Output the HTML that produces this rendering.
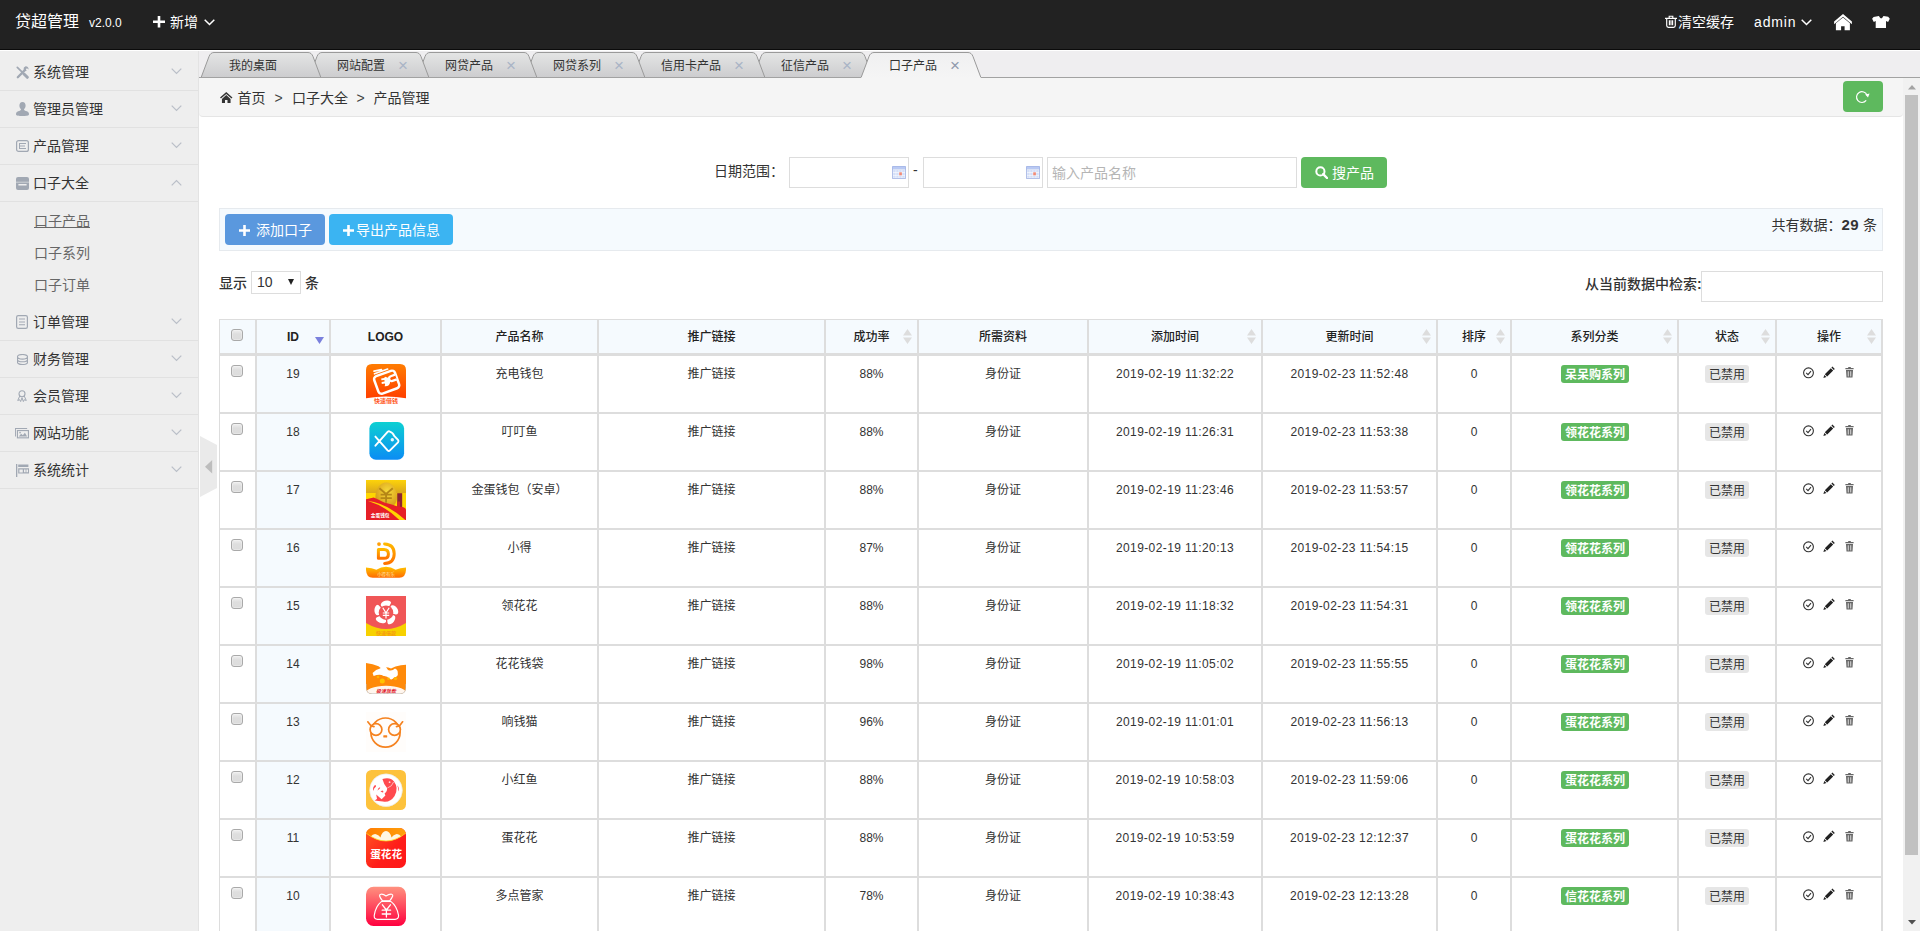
<!DOCTYPE html>
<html lang="zh-CN">
<head>
<meta charset="utf-8">
<title>贷超管理 v2.0.0</title>
<style>
*{box-sizing:border-box}
html,body{margin:0;padding:0}
body{width:1920px;height:931px;overflow:hidden;position:relative;background:#fff;color:#333;
 font-family:"Liberation Sans","Noto Sans CJK SC",sans-serif;font-size:14px;line-height:1.5}
a{color:inherit;text-decoration:none}
ul,dl,dt,dd,li{margin:0;padding:0;list-style:none}
svg{display:block}
.abs{position:absolute}
/* header */
#hd{position:absolute;left:0;top:0;width:1920px;height:50px;background:#222;border-bottom:1px solid #0b0b0b;color:#fff}
#hd .t{position:absolute;white-space:nowrap;line-height:20px}
#hd svg{position:absolute}
/* aside */
#aside{position:absolute;left:0;top:51px;width:199px;height:880px;background:#eee;border-right:1px solid #e3e3e3}
#aside dl{position:absolute;left:0;width:198px}
#aside dt{position:relative;height:37px;line-height:36px;border-bottom:1px solid #e1e1e1;padding-left:33px;font-size:14px;color:#333;white-space:nowrap}
#aside dt svg{position:absolute}
#aside dd ul{padding:3px 8px}
#aside dd li{line-height:32px;height:32px;padding-left:26px;color:#666;font-size:14px}
#aside dd li.cur a{text-decoration:underline}
/* tabs */
#tabs{position:absolute;left:199px;top:51px;width:1721px;height:27px;background:#efeef0;border-bottom:1px solid #a2a2a2}
#tabs svg{position:absolute;left:0;top:0}
#tabs .tt{position:absolute;top:6px;font-size:12px;line-height:18px;color:#333;white-space:nowrap}
#tabs .x{position:absolute;top:6px;font-size:17px;line-height:18px;color:#a9b4c6}
/* article */
#art{position:absolute;left:199px;top:78px;width:1721px;height:853px;background:#fff;overflow:hidden}
#bc{position:absolute;left:0;top:0;width:1704px;height:39px;background:#f5f5f5;border-bottom:1px solid #e5e5e5;border-radius:0 0 4px 4px}
#bc .t{position:absolute;top:10px;line-height:21px;font-size:14px;color:#333;white-space:nowrap}
#bc .gt{color:#444;font-size:14px}
#rf{position:absolute;left:1644px;top:3px;width:40px;height:31px;background:#5eb95e;border-radius:4px}
#sb{position:absolute;left:1704px;top:0;width:17px;height:853px;background:#f1f1f1}
#sb i{position:absolute;left:2px;top:17px;width:13px;height:760px;background:#c1c1c1}
.inp{position:absolute;height:31px;border:1px solid #ddd;background:#fff;font-size:14px;color:#b5b5b5;line-height:31px;padding-left:4px;white-space:nowrap}
.btn{position:absolute;height:31px;border-radius:4px;color:#fff;font-size:14px;line-height:31px;padding-top:1px;overflow:hidden;white-space:nowrap;text-align:center}
#bar{position:absolute;left:20px;top:130px;width:1664px;height:43px;background:#f5fafe;border:1px solid #e6eaee}
#tb{position:absolute;left:20px;top:241px;width:1664px;border-collapse:separate;border-spacing:0;table-layout:fixed;border-left:1px solid #ddd;border-top:1px solid #ddd;font-size:12px;color:#333}
#tb th,#tb td{border-right:2px solid #ddd;border-bottom:2px solid #ddd;text-align:center;vertical-align:top;padding:0;white-space:nowrap;overflow:hidden}
#tb th{height:36px;border-bottom-width:3px;background:#f5fafe;font-weight:500;line-height:31px;padding-top:2px;position:relative;color:#222}
#tb td{height:58px;line-height:20px;padding-top:8px;background:#fff}
#tb td.s{background:#f5fafe}
#tb td.dt{letter-spacing:.4px}
#tb .so{position:absolute;right:5px;top:9px}
.cb{display:inline-block;position:relative;left:-.5px;width:12px;height:12px;border:1px solid #a9a9a9;border-radius:3px;background:linear-gradient(#efefef,#dedede 40%,#dcdcdc);vertical-align:top;margin-top:1px;box-shadow:inset 0 0 0 1px rgba(255,255,255,.25)}
.lg{display:inline-block;width:40px;height:40px;vertical-align:top}
.lb{display:inline-block;height:18px;line-height:16px;padding:2px 4px 0;border-radius:3px;font-size:12px;vertical-align:top;margin-top:1px}
.lb.g{background:#5eb95e;color:#fff;font-weight:bold;width:68px;padding-left:0;padding-right:0;position:relative;left:.5px}
.lb.d{background:#e6e6e6;color:#333}
.lt{font-family:"Liberation Sans","Noto Sans CJK SC",sans-serif}
.ops{display:inline-block;vertical-align:top;margin-top:2px}
</style>
</head>
<body>
<div id="hd">
<span class="t" style="left:15px;top:12px;font-size:16px">贷超管理</span>
<span class="t" style="left:89px;top:13px;font-size:12px">v2.0.0</span>
<svg style="left:153px;top:16px" width="12" height="11.500" viewBox="0 0 12 12" preserveAspectRatio="none"><path d="M4.7 0h2.6v4.7H12v2.6H7.300V12H4.7V7.300H0V4.7h4.7z" fill="#fff"/></svg>
<span class="t" style="left:170px;top:12px;font-size:14px">新增</span>
<svg style="left:204px;top:19px" width="11" height="7" viewBox="0 0 11 7"><path d="M0.7 0.7 L5.5 5.5 L10.3 0.7" fill="none" stroke="#fff" stroke-width="1.5"/></svg>
<svg style="left:1665px;top:15px" width="12" height="13" viewBox="0 0 12 13"><path d="M0 3.300h12 M4.200 3V1.200h3.600V3 M1.700 3.600 V10.600 Q1.700 12.300 3.400 12.300 H8.600 Q10.300 12.300 10.300 10.600 V3.600 M4.400 5.200v5 M6 5.200v5 M7.600 5.200v5" fill="none" stroke="#fff" stroke-width="1.150"/></svg>
<span class="t" style="left:1678px;top:12px;font-size:14px">清空缓存</span>
<span class="t" style="left:1754px;top:12px;font-size:14px;letter-spacing:.85px">admin</span>
<svg style="left:1801px;top:19px" width="11" height="7" viewBox="0 0 11 7"><path d="M0.7 0.7 L5.5 5.5 L10.3 0.7" fill="none" stroke="#fff" stroke-width="1.5"/></svg>
<svg style="left:1834px;top:14px" width="18" height="17" viewBox="0 0 18 17"><path d="M9 0 L17.900 7.600 V10.200 L9 2.700 L0.100 10.200 V7.600 Z M9 3.500 L15.900 9.300 V16.300 H10.600 V12.300 H7.100 V16.300 H1.900 V9.300 Z" fill="#fff"/></svg>
<svg style="left:1872px;top:16px" width="18" height="12" viewBox="0 0 18 12"><path d="M1.600 0.900 L6.900 0.100 Q9.100 4.800 11.500 0.100 L16.200 0.800 L17.800 2.800 L16.100 5.900 L14 5 V12.100 H3.700 V5 L1.800 5.900 L0.100 2.800 Z" fill="#fff"/></svg>
</div>
<div id="aside">
<dl style="top:3px"><dt><svg style="left:16px;top:12px" width="13" height="13" viewBox="0 0 13 13"><path d="M1.300 1.300 L6.200 6.200" stroke="#a1a8b3" stroke-width="1.700" stroke-linecap="round" fill="none"/><path d="M8 8 L11.300 11.300" stroke="#a1a8b3" stroke-width="3" stroke-linecap="round" fill="none"/><path d="M1.800 11.200 L8.600 4.400" stroke="#a1a8b3" stroke-width="2.300" stroke-linecap="round" fill="none"/><path d="M9.200 0.400 Q12.200 0 12.700 3.400 L10.900 2.300 L9.900 3.300 L10.600 5 Q8 5.400 7.600 3.200 Q7.400 1.200 9.200 0.400z" fill="#a1a8b3"/></svg>系统管理<svg style="left:171px;top:14px" width="11" height="7" viewBox="0 0 11 7"><path d="M0.7 0.7 L5.5 5.5 L10.3 0.7" fill="none" stroke="#b9bec7" stroke-width="1.2"/></svg></dt></dl>
<dl style="top:40px"><dt><svg style="left:16px;top:11px" width="13" height="14" viewBox="0 0 13 14"><path d="M6.5 0 C8.6 0 9.6 1.6 9.6 3.6 C9.6 5.2 8.9 6.6 8 7.3 C8 8.2 8.6 8.6 10 9 C12.2 9.6 13 10.4 13 12.4 C13 13.4 10 14 6.5 14 C3 14 0 13.4 0 12.4 C0 10.4 0.8 9.6 3 9 C4.4 8.6 5 8.2 5 7.3 C4.1 6.6 3.4 5.2 3.4 3.6 C3.4 1.6 4.4 0 6.5 0Z" fill="#a1a8b3"/></svg>管理员管理<svg style="left:171px;top:14px" width="11" height="7" viewBox="0 0 11 7"><path d="M0.7 0.7 L5.5 5.5 L10.3 0.7" fill="none" stroke="#b9bec7" stroke-width="1.2"/></svg></dt></dl>
<dl style="top:77px"><dt><svg style="left:16px;top:12px" width="13" height="12" viewBox="0 0 13 12"><rect x=".6" y=".6" width="11.8" height="10.8" rx="2" fill="none" stroke="#a1a8b3" stroke-width="1.2"/><path d="M3 3h7v1H4v1.6h5v1H4V8h6v1H3z" fill="#a1a8b3"/></svg>产品管理<svg style="left:171px;top:14px" width="11" height="7" viewBox="0 0 11 7"><path d="M0.7 0.7 L5.5 5.5 L10.3 0.7" fill="none" stroke="#b9bec7" stroke-width="1.2"/></svg></dt></dl>
<dl style="top:114px"><dt><svg style="left:16px;top:12px" width="13" height="13" viewBox="0 0 13 13"><path d="M2 0h9q2 0 2 2v9q0 2-2 2H2q-2 0-2-2V2Q0 0 2 0z M2.4 7v1.6h8.2V7z" fill="#a1a8b3" fill-rule="evenodd"/><path d="M0 5.2h13" stroke="#eee" stroke-width=".6"/></svg>口子大全<svg style="left:171px;top:14px" width="11" height="7" viewBox="0 0 11 7"><path d="M0.7 6.3 L5.5 1.5 L10.3 6.3" fill="none" stroke="#b9bec7" stroke-width="1.2"/></svg></dt>
<dd><ul><li class="cur"><a>口子产品</a></li><li><a>口子系列</a></li><li><a>口子订单</a></li></ul></dd></dl>
<dl style="top:253px"><dt><svg style="left:16px;top:11px" width="12" height="14" viewBox="0 0 12 14"><rect x=".6" y=".6" width="10.8" height="12.8" rx="1.6" fill="none" stroke="#a1a8b3" stroke-width="1.2"/><path d="M3 3.6h6v1H3z M3 6.4h6v1H3z M3 9.2h6v1H3z" fill="#a1a8b3"/></svg>订单管理<svg style="left:171px;top:14px" width="11" height="7" viewBox="0 0 11 7"><path d="M0.7 0.7 L5.5 5.5 L10.3 0.7" fill="none" stroke="#b9bec7" stroke-width="1.2"/></svg></dt></dl>
<dl style="top:290px"><dt><svg style="left:17px;top:13px" width="11" height="11" viewBox="0 0 11 11"><path d="M5.5 0.5 C8.3 0.5 10.5 1.4 10.5 2.8 V8.2 C10.5 9.6 8.3 10.5 5.5 10.5 C2.7 10.5 0.5 9.6 0.5 8.2 V2.8 C0.5 1.4 2.7 0.5 5.5 0.5Z M0.5 2.8 C0.5 4.2 2.7 5.1 5.5 5.1 C8.3 5.1 10.5 4.2 10.5 2.8 M0.5 5.5 C0.5 6.9 2.7 7.8 5.5 7.8 C8.3 7.8 10.5 6.9 10.5 5.5" fill="none" stroke="#a1a8b3" stroke-width="1.1"/></svg>财务管理<svg style="left:171px;top:14px" width="11" height="7" viewBox="0 0 11 7"><path d="M0.7 0.7 L5.5 5.5 L10.3 0.7" fill="none" stroke="#b9bec7" stroke-width="1.2"/></svg></dt></dl>
<dl style="top:327px"><dt><svg style="left:17px;top:12px" width="10" height="12" viewBox="0 0 11 13"><circle cx="5.5" cy="4" r="3.3" fill="none" stroke="#a1a8b3" stroke-width="1.2"/><path d="M3 6.6 L0.8 11.4 L3 10.6 L4 12.6 L5.5 8.4 L7 12.6 L8 10.6 L10.2 11.4 L8 6.6" fill="none" stroke="#a1a8b3" stroke-width="1.1"/></svg>会员管理<svg style="left:171px;top:14px" width="11" height="7" viewBox="0 0 11 7"><path d="M0.7 0.7 L5.5 5.5 L10.3 0.7" fill="none" stroke="#b9bec7" stroke-width="1.2"/></svg></dt></dl>
<dl style="top:364px"><dt><svg style="left:15px;top:13px" width="14" height="10.500" viewBox="0 0 15 11"><path d="M0 0h13v1H1v8H0z" fill="#a1a8b3"/><rect x="2.6" y="2.6" width="11.8" height="7.8" fill="none" stroke="#a1a8b3" stroke-width="1.2"/><path d="M4 9 L6.6 6 L8.4 7.6 L10.6 5 L13 9z" fill="#a1a8b3"/><circle cx="5.4" cy="4.8" r=".9" fill="#a1a8b3"/></svg>网站功能<svg style="left:171px;top:14px" width="11" height="7" viewBox="0 0 11 7"><path d="M0.7 0.7 L5.5 5.5 L10.3 0.7" fill="none" stroke="#b9bec7" stroke-width="1.2"/></svg></dt></dl>
<dl style="top:401px"><dt><svg style="left:16px;top:12px" width="13" height="13" viewBox="0 0 13 13"><path d="M0 0h1.3v13H0z M2.2 0.6h10.2v2.4H2.2z M2.2 4.2h10.8v5.4H2.2z M3.4 5.4v3h3.4v-3z M8 5.6h1.6v2.6H8z M10.4 5.6H12v2.6h-1.6z" fill="#a1a8b3" fill-rule="evenodd"/></svg>系统统计<svg style="left:171px;top:14px" width="11" height="7" viewBox="0 0 11 7"><path d="M0.7 0.7 L5.5 5.5 L10.3 0.7" fill="none" stroke="#b9bec7" stroke-width="1.2"/></svg></dt></dl>
</div>
<div id="tabs"><svg width="1721" height="27" viewBox="0 0 1721 27"><defs><linearGradient id="tg" x1="0" y1="0" x2="0" y2="1"><stop offset="0" stop-color="#e4e5e5"/><stop offset="1" stop-color="#cdcdcf"/></linearGradient><linearGradient id="ta" x1="0" y1="0" x2="0" y2="1"><stop offset="0" stop-color="#f0f0f1"/><stop offset="1" stop-color="#f5f5f5"/></linearGradient></defs><path d="M554.3 26 L562 5.5 C563 3 564.5 1.5 567 1.5 H661 C663.5 1.5 665 3 666 5.5 L673.7 26 Z" fill="url(#tg)"/><path d="M554.3 26 L562 5.5 C563 3 564.5 1.5 567 1.5 H661 C663.5 1.5 665 3 666 5.5 L673.7 26" fill="none" stroke="#9a9a9a" stroke-width="1"/><path d="M434.3 26 L442 5.5 C443 3 444.5 1.5 447 1.5 H553 C555.5 1.5 557 3 558 5.5 L565.7 26 Z" fill="url(#tg)"/><path d="M434.3 26 L442 5.5 C443 3 444.5 1.5 447 1.5 H553 C555.5 1.5 557 3 558 5.5 L565.7 26" fill="none" stroke="#9a9a9a" stroke-width="1"/><path d="M326.3 26 L334 5.5 C335 3 336.5 1.5 339 1.5 H433 C435.5 1.5 437 3 438 5.5 L445.7 26 Z" fill="url(#tg)"/><path d="M326.3 26 L334 5.5 C335 3 336.5 1.5 339 1.5 H433 C435.5 1.5 437 3 438 5.5 L445.7 26" fill="none" stroke="#9a9a9a" stroke-width="1"/><path d="M218.3 26 L226 5.5 C227 3 228.5 1.5 231 1.5 H325 C327.5 1.5 329 3 330 5.5 L337.7 26 Z" fill="url(#tg)"/><path d="M218.3 26 L226 5.5 C227 3 228.5 1.5 231 1.5 H325 C327.5 1.5 329 3 330 5.5 L337.7 26" fill="none" stroke="#9a9a9a" stroke-width="1"/><path d="M110.3 26 L118 5.5 C119 3 120.5 1.5 123 1.5 H217 C219.5 1.5 221 3 222 5.5 L229.7 26 Z" fill="url(#tg)"/><path d="M110.3 26 L118 5.5 C119 3 120.5 1.5 123 1.5 H217 C219.5 1.5 221 3 222 5.5 L229.7 26" fill="none" stroke="#9a9a9a" stroke-width="1"/><path d="M2.3 26 L10 5.5 C11 3 12.5 1.5 15 1.5 H109 C111.5 1.5 113 3 114 5.5 L121.7 26 Z" fill="url(#tg)"/><path d="M2.3 26 L10 5.5 C11 3 12.5 1.5 15 1.5 H109 C111.5 1.5 113 3 114 5.5 L121.7 26" fill="none" stroke="#9a9a9a" stroke-width="1"/><path d="M662.3 26 L670 5.5 C671 3 672.5 1.5 675 1.5 H769 C771.5 1.5 773 3 774 5.5 L781.7 26 V28 H662.3 Z" fill="url(#ta)"/><path d="M662.3 26 L670 5.5 C671 3 672.5 1.5 675 1.5 H769 C771.5 1.5 773 3 774 5.5 L781.7 26" fill="none" stroke="#9a9a9a" stroke-width="1"/></svg><span class="tt" style="left:30px">我的桌面</span><span class="tt" style="left:138px">网站配置</span><span class="x" style="left:199px">×</span><span class="tt" style="left:246px">网贷产品</span><span class="x" style="left:307px">×</span><span class="tt" style="left:354px">网贷系列</span><span class="x" style="left:415px">×</span><span class="tt" style="left:462px">信用卡产品</span><span class="x" style="left:535px">×</span><span class="tt" style="left:582px">征信产品</span><span class="x" style="left:643px">×</span><span class="tt" style="left:690px">口子产品</span><span class="x" style="left:751px;color:#8f9aac">×</span></div>
<div id="art">
<div id="bc">
<svg class="abs" style="left:21px;top:13.500px" width="12.500" height="11.500" viewBox="0 0 13 12"><path d="M6.5 0 L13 5.8 L12 6.9 L6.5 2 L1 6.9 L0 5.8 Z M6.5 3.2 L11 7.2 V12 H7.8 V8.4 H5.2 V12 H2 V7.2 Z" fill="#333"/></svg>
<span class="t" style="left:38.500px">首页</span><span class="t gt" style="left:75.500px">&gt;</span>
<span class="t" style="left:93px">口子大全</span><span class="t gt" style="left:157.500px">&gt;</span>
<span class="t" style="left:174.500px">产品管理</span>
<div id="rf"><svg class="abs" style="left:12px;top:9px" width="16" height="14" viewBox="0 0 16 14"><path d="M12 5.2 A5.4 5.4 0 1 0 11.2 10.4" fill="none" stroke="#fff" stroke-width="1.2"/><path d="M10.2 4.4 L14.6 3.6 L13 7.400z" fill="#fff"/></svg></div>
</div>
<span class="abs" style="left:515px;top:83px;font-size:14px;line-height:21px;white-space:nowrap">日期范围：</span>
<div class="inp" style="left:590px;top:79px;width:120px"><svg class="abs" style="left:102px;top:8px" width="14" height="13" viewBox="0 0 14 13"><rect x="0" y="0" width="14" height="13" rx="1" fill="#9fb1e3"/><rect x=".6" y=".6" width="12.800" height="2.600" fill="#b9c9f3"/><rect x=".8" y="3.400" width="12.400" height="8.800" fill="#fff"/><g fill="#d3def8"><rect x="1.200" y="3.900" width="2.500" height="2.300"/><rect x="4.200" y="3.900" width="2.500" height="2.300"/><rect x="7.200" y="3.900" width="2.500" height="2.300"/><rect x="10.200" y="3.900" width="2.500" height="2.300"/><rect x="1.200" y="6.700" width="2.500" height="2.300"/><rect x="4.200" y="6.700" width="2.500" height="2.300"/><rect x="10.200" y="6.700" width="2.500" height="2.300"/><rect x="1.200" y="9.500" width="2.500" height="2.300"/><rect x="4.200" y="9.500" width="2.500" height="2.300"/><rect x="7.200" y="9.500" width="2.500" height="2.300"/><rect x="10.200" y="9.500" width="2.500" height="2.300"/></g><rect x="7.200" y="6.300" width="2.700" height="3" fill="#f08b78"/></svg></div>
<span class="abs" style="left:714px;top:82px;font-size:14px;line-height:21px">-</span>
<div class="inp" style="left:724px;top:79px;width:120px"><svg class="abs" style="left:102px;top:8px" width="14" height="13" viewBox="0 0 14 13"><rect x="0" y="0" width="14" height="13" rx="1" fill="#9fb1e3"/><rect x=".6" y=".6" width="12.800" height="2.600" fill="#b9c9f3"/><rect x=".8" y="3.400" width="12.400" height="8.800" fill="#fff"/><g fill="#d3def8"><rect x="1.200" y="3.900" width="2.500" height="2.300"/><rect x="4.200" y="3.900" width="2.500" height="2.300"/><rect x="7.200" y="3.900" width="2.500" height="2.300"/><rect x="10.200" y="3.900" width="2.500" height="2.300"/><rect x="1.200" y="6.700" width="2.500" height="2.300"/><rect x="4.200" y="6.700" width="2.500" height="2.300"/><rect x="10.200" y="6.700" width="2.500" height="2.300"/><rect x="1.200" y="9.500" width="2.500" height="2.300"/><rect x="4.200" y="9.500" width="2.500" height="2.300"/><rect x="7.200" y="9.500" width="2.500" height="2.300"/><rect x="10.200" y="9.500" width="2.500" height="2.300"/></g><rect x="7.200" y="6.300" width="2.700" height="3" fill="#f08b78"/></svg></div>
<div class="inp" style="left:848px;top:79px;width:250px">输入产品名称</div>
<div class="btn" style="left:1102px;top:79px;width:86px;background:#5eb95e;text-align:left;padding-left:31px"><svg class="abs" style="left:14px;top:9px" width="13" height="13" viewBox="0 0 13 13"><circle cx="5.4" cy="5.4" r="4.1" fill="none" stroke="#fff" stroke-width="2"/><path d="M8.2 8.2 L12 12" stroke="#fff" stroke-width="2.4" stroke-linecap="round"/></svg>搜产品</div>
<div id="bar">
<div class="btn" style="left:5px;top:5px;width:100px;background:#5a98de;text-align:left;padding-left:31px"><svg class="abs" style="left:14px;top:10.500px" width="11" height="11" viewBox="0 0 11 11"><path d="M4.200 0h2.600v4.200H11v2.600H6.800V11H4.200V6.800H0V4.200h4.200z" fill="#fff"/></svg>添加口子</div>
<div class="btn" style="left:109px;top:5px;width:124px;background:#3bb4f2;text-align:left;padding-left:27px"><svg class="abs" style="left:14px;top:10.500px" width="11" height="11" viewBox="0 0 11 11"><path d="M4.200 0h2.600v4.200H11v2.600H6.800V11H4.200V6.800H0V4.200h4.200z" fill="#fff"/></svg>导出产品信息</div>
<span class="abs" style="right:5px;top:5px;line-height:21px;font-size:14px;white-space:nowrap">共有数据：<b style="font-size:15px;letter-spacing:.4px">29</b> 条</span>
</div>
<span class="abs" style="left:20px;top:195px;font-size:14px;line-height:21px;font-weight:500">显示</span>
<div class="abs" style="left:52px;top:193px;width:50px;height:23px;border:1px solid #ddd;background:#fff;font-size:14px;line-height:21px;padding-left:5px">10<svg class="abs" style="left:36px;top:7px" width="6" height="6" viewBox="0 0 6 6"><path d="M0 0h6L3 6z" fill="#222"/></svg></div>
<span class="abs" style="left:106px;top:195px;font-size:14px;line-height:21px;font-weight:500">条</span>
<span class="abs" style="left:1386px;top:196px;font-size:14px;line-height:21px;font-weight:500;white-space:nowrap">从当前数据中检索<b>:</b></span>
<div class="inp" style="left:1502px;top:193px;width:182px"></div>
<table id="tb">
<colgroup><col style="width:37px"><col style="width:74px"><col style="width:111px"><col style="width:157px"><col style="width:227px"><col style="width:93px"><col style="width:170px"><col style="width:174px"><col style="width:175px"><col style="width:74px"><col style="width:167px"><col style="width:98px"><col style="width:106px"></colgroup>
<thead><tr>
<th><span class="cb" style="margin-top:7px"></span></th>
<th><b>ID</b><svg class="so" style="top:17px" width="9" height="7" viewBox="0 0 9 7"><path d="M0 0 H9 L4.5 7z" fill="#7a80dd"/></svg></th>
<th><b>LOGO</b></th>
<th>产品名称</th>
<th>推广链接</th>
<th>成功率<svg class="so" width="9" height="15" viewBox="0 0 9 15"><path d="M4.5 0 L9 6.5 H0z M0 8.5 H9 L4.5 15z" fill="#ddd"/></svg></th>
<th>所需资料</th>
<th>添加时间<svg class="so" width="9" height="15" viewBox="0 0 9 15"><path d="M4.5 0 L9 6.5 H0z M0 8.5 H9 L4.5 15z" fill="#ddd"/></svg></th>
<th>更新时间<svg class="so" width="9" height="15" viewBox="0 0 9 15"><path d="M4.5 0 L9 6.5 H0z M0 8.5 H9 L4.5 15z" fill="#ddd"/></svg></th>
<th>排序<svg class="so" width="9" height="15" viewBox="0 0 9 15"><path d="M4.5 0 L9 6.5 H0z M0 8.5 H9 L4.5 15z" fill="#ddd"/></svg></th>
<th>系列分类<svg class="so" width="9" height="15" viewBox="0 0 9 15"><path d="M4.5 0 L9 6.5 H0z M0 8.5 H9 L4.5 15z" fill="#ddd"/></svg></th>
<th>状态<svg class="so" width="9" height="15" viewBox="0 0 9 15"><path d="M4.5 0 L9 6.5 H0z M0 8.5 H9 L4.5 15z" fill="#ddd"/></svg></th>
<th>操作<svg class="so" width="9" height="15" viewBox="0 0 9 15"><path d="M4.5 0 L9 6.5 H0z M0 8.5 H9 L4.5 15z" fill="#ddd"/></svg></th>
</tr></thead>
<tbody>
<tr><td><span class="cb"></span></td><td class="s">19</td><td><svg class="lg" width="40" height="40" viewBox="0 0 40 40"><defs><linearGradient id="l19" x1="0" y1="0" x2="0" y2="1"><stop offset="0" stop-color="#ff7d02"/><stop offset="1" stop-color="#ff3f00"/></linearGradient></defs><path d="M6 0H34Q40 0 40 6V34.300Q20 30.600 0 34.300V6Q0 0 6 0z" fill="url(#l19)"/><g transform="rotate(-20 20.500 18)"><rect x="9.600" y="9" width="22" height="18.500" rx="3.200" fill="none" stroke="#fff" stroke-width="2.500"/><path d="M31 14 H26.500 Q24 14 24 16.500 Q24 19 26.500 19 H31" fill="#ff5a00" stroke="#fff" stroke-width="2.200"/><path d="M12 6.200 L26 6.200 M12.500 3.600 L20 4.600" stroke="#fff" stroke-width="1.700" stroke-linecap="round"/></g><path d="M19 12.800 Q24.600 13.600 24.200 18 Q23.600 22.600 18.600 22.200 Q19.600 20.400 18.800 19.600 L15.800 20 L15.600 18 L18.600 17.500 L18.400 16 L15.400 16.300 L15.200 14.400 L18.200 14 Q18.800 13.400 19 12.800z" fill="#fff"/><text x="20" y="39.400" font-size="6" font-weight="bold" fill="#ff5a1f" text-anchor="middle" class="lt">快速借钱</text></svg></td><td>充电钱包</td><td>推广链接</td><td>88%</td><td>身份证</td><td class="dt">2019-02-19 11:32:22</td><td class="dt">2019-02-23 11:52:48</td><td>0</td><td><span class="lb g">呆呆购系列</span></td><td><span class="lb d">已禁用</span></td><td><svg class="ops" width="52" height="13" viewBox="0 0 52 13"><circle cx="5.500" cy="6.800" r="4.900" fill="none" stroke="#333" stroke-width="1.100"/><path d="M3.200 6.900 L5 8.600 L8 5.100" fill="none" stroke="#333" stroke-width="1.100"/><path d="M29.400 0.600 L31.800 3 L30.800 4 L28.400 1.600z M27.800 2.200 L30.200 4.600 L24.200 10.600 L21.800 8.200z M21.300 8.900 L23.500 11.100 L20.400 12z" fill="#222"/><path d="M45.200 1h2.600v1H50.600v1.200h-8.200V2h2.800z M43 4h7l-.5 7.600h-6z M44.800 5.200v5.200h.8V5.200z M47.400 5.200v5.200h.8V5.200z" fill="#666" fill-rule="evenodd"/></svg></td></tr>
<tr><td><span class="cb"></span></td><td class="s">18</td><td><svg class="lg" width="40" height="40" viewBox="0 0 40 40"><defs><linearGradient id="l18" x1="0" y1="0" x2="0" y2="1"><stop offset="0" stop-color="#0dd0d2"/><stop offset="1" stop-color="#0b8cf4"/></linearGradient></defs><rect x="3.400" y="0" width="34.700" height="37.700" rx="6.500" fill="url(#l18)"/><path d="M9.400 14.600 L21.600 28.400 Q22.800 29.600 24 28.400 L32 20.300 Q33 19.100 32 17.900 L28.200 13.800 Q26.800 10.400 23.800 9.600 Q22.800 8.800 21.600 9.900 L9.400 23.700" fill="none" stroke="#fff" stroke-width="1.900" stroke-linejoin="round" stroke-linecap="round"/><circle cx="26.300" cy="17.800" r="1.700" fill="#e4f7ff"/></svg></td><td>叮叮鱼</td><td>推广链接</td><td>88%</td><td>身份证</td><td class="dt">2019-02-19 11:26:31</td><td class="dt">2019-02-23 11:53:38</td><td>0</td><td><span class="lb g">领花花系列</span></td><td><span class="lb d">已禁用</span></td><td><svg class="ops" width="52" height="13" viewBox="0 0 52 13"><circle cx="5.500" cy="6.800" r="4.900" fill="none" stroke="#333" stroke-width="1.100"/><path d="M3.200 6.900 L5 8.600 L8 5.100" fill="none" stroke="#333" stroke-width="1.100"/><path d="M29.400 0.600 L31.800 3 L30.800 4 L28.400 1.600z M27.800 2.200 L30.200 4.600 L24.200 10.600 L21.800 8.200z M21.300 8.900 L23.500 11.100 L20.400 12z" fill="#222"/><path d="M45.200 1h2.600v1H50.600v1.200h-8.200V2h2.800z M43 4h7l-.5 7.600h-6z M44.800 5.200v5.200h.8V5.200z M47.400 5.200v5.200h.8V5.200z" fill="#666" fill-rule="evenodd"/></svg></td></tr>
<tr><td><span class="cb"></span></td><td class="s">17</td><td><svg class="lg" width="40" height="40" viewBox="0 0 40 40"><defs><linearGradient id="l17" x1="0" y1="0" x2="0" y2="1"><stop offset="0" stop-color="#fdd30a"/><stop offset=".315" stop-color="#dba91b"/><stop offset=".325" stop-color="#ffd600"/><stop offset="1" stop-color="#ffd600"/></linearGradient><radialGradient id="l17e" cx=".56" cy=".36" r=".62"><stop offset="0" stop-color="#f7dc3c"/><stop offset=".55" stop-color="#e6b828"/><stop offset="1" stop-color="#d39a1a"/></radialGradient></defs><rect width="40" height="40" fill="url(#l17)"/><path d="M31.200 13.200h5v15h-5z" fill="#8c2431"/><path d="M31.200 21.500h2.800v7h-2.800z" fill="#d2272d"/><path d="M20.200 2.600 C26.600 2.600 31 10 31 17 C31 24 26.600 28.400 20.200 28.400 C13.800 28.400 9.400 24 9.400 17 C9.400 10 13.800 2.600 20.200 2.600z" fill="url(#l17e)"/><path d="M13.400 8.200 L20 14 L26.800 8.200 M14.600 14.600h11.200 M14.600 18.100h11.200 M20.100 13.800v9" stroke="#b58616" stroke-width="1.900" fill="none"/><path d="M0 19.200 L7.800 17.500 C12 19 17 22.500 22 23.600 C26 24.600 29 25.800 31 26.200 L36.500 27 Q40 28 40 30 V40 H0z" fill="#e61f27"/><path d="M1.600 20.800 Q22 24 39.400 40 H33.400 Q20 26.400 1.600 20.800z" fill="#ffd400"/><text x="4.800" y="36.900" font-size="4.700" font-weight="bold" fill="#fff" class="lt">金蛋钱包</text></svg></td><td>金蛋钱包（安卓）</td><td>推广链接</td><td>88%</td><td>身份证</td><td class="dt">2019-02-19 11:23:46</td><td class="dt">2019-02-23 11:53:57</td><td>0</td><td><span class="lb g">领花花系列</span></td><td><span class="lb d">已禁用</span></td><td><svg class="ops" width="52" height="13" viewBox="0 0 52 13"><circle cx="5.500" cy="6.800" r="4.900" fill="none" stroke="#333" stroke-width="1.100"/><path d="M3.200 6.900 L5 8.600 L8 5.100" fill="none" stroke="#333" stroke-width="1.100"/><path d="M29.400 0.600 L31.800 3 L30.800 4 L28.400 1.600z M27.800 2.200 L30.200 4.600 L24.200 10.600 L21.800 8.200z M21.300 8.900 L23.500 11.100 L20.400 12z" fill="#222"/><path d="M45.200 1h2.600v1H50.600v1.200h-8.200V2h2.800z M43 4h7l-.5 7.600h-6z M44.800 5.200v5.200h.8V5.200z M47.400 5.200v5.200h.8V5.200z" fill="#666" fill-rule="evenodd"/></svg></td></tr>
<tr><td><span class="cb"></span></td><td class="s">16</td><td><svg class="lg" width="40" height="40" viewBox="0 0 40 40"><defs><linearGradient id="l16" x1="0" y1="0" x2="0" y2="1"><stop offset="0" stop-color="#ffb800"/><stop offset="1" stop-color="#ff7300"/></linearGradient><linearGradient id="l16b" x1="0" y1="0" x2="0" y2="1"><stop offset="0" stop-color="#ffc400"/><stop offset="1" stop-color="#ff6a00"/></linearGradient></defs><circle cx="13" cy="6.100" r="1.900" fill="#ff9f0a"/><path d="M18.600 5.900 Q28.200 6.400 28.200 15.700 Q28.200 25 18.600 25.500" fill="none" stroke="url(#l16)" stroke-width="3" stroke-linecap="round"/><path d="M12.400 11.400 H18 Q22.400 11.400 22.400 15.900 Q22.400 20.300 18 20.300 H12.400 Z" fill="none" stroke="url(#l16)" stroke-width="3" stroke-linejoin="round"/><path d="M0 29.500 Q6 30 10.400 31.800 Q15 28.800 20 28.800 Q25 28.800 29.600 31.800 Q34 30 40 29.500 Q40.500 40 33 39.800 H7 Q-0.500 40 0 29.500z" fill="url(#l16b)"/><text x="20" y="37.600" font-size="4.400" fill="#ffe6b0" text-anchor="middle" class="lt">小得有乐</text></svg></td><td>小得</td><td>推广链接</td><td>87%</td><td>身份证</td><td class="dt">2019-02-19 11:20:13</td><td class="dt">2019-02-23 11:54:15</td><td>0</td><td><span class="lb g">领花花系列</span></td><td><span class="lb d">已禁用</span></td><td><svg class="ops" width="52" height="13" viewBox="0 0 52 13"><circle cx="5.500" cy="6.800" r="4.900" fill="none" stroke="#333" stroke-width="1.100"/><path d="M3.200 6.900 L5 8.600 L8 5.100" fill="none" stroke="#333" stroke-width="1.100"/><path d="M29.400 0.600 L31.800 3 L30.800 4 L28.400 1.600z M27.800 2.200 L30.200 4.600 L24.200 10.600 L21.800 8.200z M21.300 8.900 L23.500 11.100 L20.400 12z" fill="#222"/><path d="M45.200 1h2.600v1H50.600v1.200h-8.200V2h2.800z M43 4h7l-.5 7.600h-6z M44.800 5.200v5.200h.8V5.200z M47.400 5.200v5.200h.8V5.200z" fill="#666" fill-rule="evenodd"/></svg></td></tr>
<tr><td><span class="cb"></span></td><td class="s">15</td><td><svg class="lg" width="40" height="40" viewBox="0 0 40 40"><rect width="40" height="40" fill="#f7d100"/><path d="M0 0H40V27 Q20 39 0 27z" fill="#f05657"/><g fill="#fff"><ellipse cx="20" cy="8.200" rx="5.400" ry="3.500" transform="rotate(0 20 16.700) rotate(-16 20 8.200)"/><ellipse cx="20" cy="8.200" rx="5.400" ry="3.500" transform="rotate(72 20 16.700) rotate(-16 20 8.200)"/><ellipse cx="20" cy="8.200" rx="5.400" ry="3.500" transform="rotate(144 20 16.700) rotate(-16 20 8.200)"/><ellipse cx="20" cy="8.200" rx="5.400" ry="3.500" transform="rotate(216 20 16.700) rotate(-16 20 8.200)"/><ellipse cx="20" cy="8.200" rx="5.400" ry="3.500" transform="rotate(288 20 16.700) rotate(-16 20 8.200)"/></g><circle cx="20" cy="16.700" r="7.300" fill="#f05657"/><g stroke="#f05657" stroke-width="1.300" fill="none"><path d="M23.600 10.800 Q25.600 8 26.400 5" transform="rotate(0 20 16.700)"/><path d="M23.600 10.800 Q25.600 8 26.400 5" transform="rotate(72 20 16.700)"/><path d="M23.600 10.800 Q25.600 8 26.400 5" transform="rotate(144 20 16.700)"/><path d="M23.600 10.800 Q25.600 8 26.400 5" transform="rotate(216 20 16.700)"/><path d="M23.600 10.800 Q25.600 8 26.400 5" transform="rotate(288 20 16.700)"/></g><path d="M16.800 11.800 L20 16.800 L23.200 11.800 M16.800 17h6.400 M16.800 19.400h6.400 M20 16.600v5.800" stroke="#fff" stroke-width="1.200" fill="none"/><text x="20" y="39" font-size="5" font-weight="bold" fill="#f59a12" text-anchor="middle" class="lt">快速借款</text></svg></td><td>领花花</td><td>推广链接</td><td>88%</td><td>身份证</td><td class="dt">2019-02-19 11:18:32</td><td class="dt">2019-02-23 11:54:31</td><td>0</td><td><span class="lb g">领花花系列</span></td><td><span class="lb d">已禁用</span></td><td><svg class="ops" width="52" height="13" viewBox="0 0 52 13"><circle cx="5.500" cy="6.800" r="4.900" fill="none" stroke="#333" stroke-width="1.100"/><path d="M3.200 6.900 L5 8.600 L8 5.100" fill="none" stroke="#333" stroke-width="1.100"/><path d="M29.400 0.600 L31.800 3 L30.800 4 L28.400 1.600z M27.800 2.200 L30.200 4.600 L24.200 10.600 L21.800 8.200z M21.300 8.900 L23.500 11.100 L20.400 12z" fill="#222"/><path d="M45.200 1h2.600v1H50.600v1.200h-8.200V2h2.800z M43 4h7l-.5 7.600h-6z M44.800 5.200v5.200h.8V5.200z M47.400 5.200v5.200h.8V5.200z" fill="#666" fill-rule="evenodd"/></svg></td></tr>
<tr><td><span class="cb"></span></td><td class="s">14</td><td><svg class="lg" width="40" height="40" viewBox="0 0 40 40"><defs><clipPath id="c14"><rect width="40" height="40" rx="6"/></clipPath></defs><g clip-path="url(#c14)"><rect width="40" height="40" fill="#fff"/><path d="M0 8.900 Q7 9.600 12.500 12.200 L15 14.200 Q20 12 25 14.600 L29.500 12.400 Q35 11 40 10.700 V40 H0z" fill="#ff8a0a"/><path d="M6.600 19 Q10 15.600 14 14.600 Q17 11.600 20 13 L22 16 Q26 17.600 29 14.600 Q32 15.500 31.800 19.400 Q32.400 22.400 28 23.600 Q26.600 26.200 23.600 25 Q21 21.600 17.600 22 Q14 19.600 7.600 22z" fill="#fff"/><circle cx="16.300" cy="27" r="2.500" fill="#ffc400"/><circle cx="29.500" cy="24.600" r="1.700" fill="#ffb400"/><circle cx="12" cy="23" r="1.300" fill="#ffb400"/><circle cx="22.500" cy="24.800" r="1.300" fill="#ffb400"/><ellipse cx="20" cy="40.500" rx="21.500" ry="8.800" fill="#fff6ee"/><text x="20" y="38.600" font-size="5" font-weight="bold" font-style="italic" fill="#e0222e" text-anchor="middle" class="lt">极速放款</text></g><path d="M.3 30 V34 Q.3 39.700 6 39.700 H34 Q39.700 39.700 39.700 34 V30" fill="none" stroke="#b9b9b9" stroke-width=".6"/></svg></td><td>花花钱袋</td><td>推广链接</td><td>98%</td><td>身份证</td><td class="dt">2019-02-19 11:05:02</td><td class="dt">2019-02-23 11:55:55</td><td>0</td><td><span class="lb g">蛋花花系列</span></td><td><span class="lb d">已禁用</span></td><td><svg class="ops" width="52" height="13" viewBox="0 0 52 13"><circle cx="5.500" cy="6.800" r="4.900" fill="none" stroke="#333" stroke-width="1.100"/><path d="M3.200 6.900 L5 8.600 L8 5.100" fill="none" stroke="#333" stroke-width="1.100"/><path d="M29.400 0.600 L31.800 3 L30.800 4 L28.400 1.600z M27.800 2.200 L30.200 4.600 L24.200 10.600 L21.800 8.200z M21.300 8.900 L23.500 11.100 L20.400 12z" fill="#222"/><path d="M45.200 1h2.600v1H50.600v1.200h-8.200V2h2.800z M43 4h7l-.5 7.600h-6z M44.800 5.200v5.200h.8V5.200z M47.400 5.200v5.200h.8V5.200z" fill="#666" fill-rule="evenodd"/></svg></td></tr>
<tr><td><span class="cb"></span></td><td class="s">13</td><td><svg class="lg" width="40" height="40" viewBox="0 0 40 40"><rect width="40" height="40" fill="#fffdfb"/><g fill="none" stroke="#f5821f" stroke-width="1.700"><circle cx="19.500" cy="20.600" r="14.600"/><circle cx="10" cy="17.500" r="5.900" fill="#fffdfb"/><circle cx="28.500" cy="17.500" r="5.900" fill="#fffdfb"/><path d="M1.800 9.800 L5 13.800 L8 14.600 M36.600 9.800 L33.600 13.800 L30.500 14.600" stroke-linecap="round"/></g><rect x="17.300" y="23.200" width="3.900" height="2.300" rx=".6" fill="#f5821f"/></svg></td><td>响钱猫</td><td>推广链接</td><td>96%</td><td>身份证</td><td class="dt">2019-02-19 11:01:01</td><td class="dt">2019-02-23 11:56:13</td><td>0</td><td><span class="lb g">蛋花花系列</span></td><td><span class="lb d">已禁用</span></td><td><svg class="ops" width="52" height="13" viewBox="0 0 52 13"><circle cx="5.500" cy="6.800" r="4.900" fill="none" stroke="#333" stroke-width="1.100"/><path d="M3.200 6.900 L5 8.600 L8 5.100" fill="none" stroke="#333" stroke-width="1.100"/><path d="M29.400 0.600 L31.800 3 L30.800 4 L28.400 1.600z M27.800 2.200 L30.200 4.600 L24.200 10.600 L21.800 8.200z M21.300 8.900 L23.500 11.100 L20.400 12z" fill="#222"/><path d="M45.200 1h2.600v1H50.600v1.200h-8.200V2h2.800z M43 4h7l-.5 7.600h-6z M44.800 5.200v5.200h.8V5.200z M47.400 5.200v5.200h.8V5.200z" fill="#666" fill-rule="evenodd"/></svg></td></tr>
<tr><td><span class="cb"></span></td><td class="s">12</td><td><svg class="lg" width="40" height="40" viewBox="0 0 40 40"><rect width="40" height="40" rx="5.500" fill="#fdc23c"/><circle cx="20" cy="20.200" r="16.500" fill="#fff"/><circle cx="20" cy="20.200" r="16.300" fill="none" stroke="#e3e0d8" stroke-width=".5"/><path d="M16.400 9 Q24 6.600 28 11.500 Q33 18 28.600 26 Q24 33 17 31.600 Q12 30.600 8.600 30.400 Q10.600 29.600 11 28.800 L10.200 24.600 L15.600 29.200 L19.400 25.400 L18.600 23.600 Q21.600 21 21 18 Q18 15 16.400 9z" fill="#ff4a4f"/><path d="M31.200 15.200 Q34 18 32.400 21.600 Q32.600 18 31.200 15.200z M7.200 21 Q6.400 17 9 15 Q10.400 15.400 10 16.400 Q7.800 18 7.200 21z M11.500 20.600 Q12 17.600 14 17.200 Q14.600 18 13.600 18.800z M14.400 21.200 l2.200 -.6 1 1.400 -1.200 .4z" fill="#ff4a4f"/><circle cx="23.600" cy="12.200" r=".9" fill="#ffd9da"/><path d="M21.400 18 Q26 16.600 27.600 12" fill="none" stroke="#fff" stroke-width=".6"/></svg></td><td>小红鱼</td><td>推广链接</td><td>88%</td><td>身份证</td><td class="dt">2019-02-19 10:58:03</td><td class="dt">2019-02-23 11:59:06</td><td>0</td><td><span class="lb g">蛋花花系列</span></td><td><span class="lb d">已禁用</span></td><td><svg class="ops" width="52" height="13" viewBox="0 0 52 13"><circle cx="5.500" cy="6.800" r="4.900" fill="none" stroke="#333" stroke-width="1.100"/><path d="M3.200 6.900 L5 8.600 L8 5.100" fill="none" stroke="#333" stroke-width="1.100"/><path d="M29.400 0.600 L31.800 3 L30.800 4 L28.400 1.600z M27.800 2.200 L30.200 4.600 L24.200 10.600 L21.800 8.200z M21.300 8.900 L23.500 11.100 L20.400 12z" fill="#222"/><path d="M45.200 1h2.600v1H50.600v1.200h-8.200V2h2.800z M43 4h7l-.5 7.600h-6z M44.800 5.200v5.200h.8V5.200z M47.400 5.200v5.200h.8V5.200z" fill="#666" fill-rule="evenodd"/></svg></td></tr>
<tr><td><span class="cb"></span></td><td class="s">11</td><td><svg class="lg" width="40" height="40" viewBox="0 0 40 40"><defs><linearGradient id="l11" x1="0" y1="0" x2="1" y2="1"><stop offset="0" stop-color="#ff5722"/><stop offset=".6" stop-color="#ff1d1a"/><stop offset="1" stop-color="#ff1718"/></linearGradient><linearGradient id="l11b" x1="0" y1="0" x2="1" y2="0"><stop offset="0" stop-color="#ff7e00"/><stop offset="1" stop-color="#ffa00c"/></linearGradient><clipPath id="c11"><rect width="40" height="40" rx="6.500"/></clipPath></defs><g clip-path="url(#c11)"><rect width="40" height="40" fill="url(#l11)"/><path d="M0 0H40V5 Q20 21 0 5z" fill="url(#l11b)"/><path d="M4.800 8.600 Q7 5.600 10 6.200 Q13 7 14.500 9.600 Q16 3 20 3 Q24 3 25.500 9.600 Q27 7 30 6.200 Q33 5.600 35.200 8.600 Q20 17.600 4.800 8.600z" fill="#fff7e2"/><path d="M0 5 Q20 21 40 5" fill="none" stroke="#ffd21a" stroke-width=".8"/></g><text x="20.200" y="30.400" font-size="10.700" font-weight="bold" fill="#fff" text-anchor="middle" class="lt">蛋花花</text></svg></td><td>蛋花花</td><td>推广链接</td><td>88%</td><td>身份证</td><td class="dt">2019-02-19 10:53:59</td><td class="dt">2019-02-23 12:12:37</td><td>0</td><td><span class="lb g">蛋花花系列</span></td><td><span class="lb d">已禁用</span></td><td><svg class="ops" width="52" height="13" viewBox="0 0 52 13"><circle cx="5.500" cy="6.800" r="4.900" fill="none" stroke="#333" stroke-width="1.100"/><path d="M3.200 6.900 L5 8.600 L8 5.100" fill="none" stroke="#333" stroke-width="1.100"/><path d="M29.400 0.600 L31.800 3 L30.800 4 L28.400 1.600z M27.800 2.200 L30.200 4.600 L24.200 10.600 L21.800 8.200z M21.300 8.900 L23.500 11.100 L20.400 12z" fill="#222"/><path d="M45.200 1h2.600v1H50.600v1.200h-8.200V2h2.800z M43 4h7l-.5 7.600h-6z M44.800 5.200v5.200h.8V5.200z M47.400 5.200v5.200h.8V5.200z" fill="#666" fill-rule="evenodd"/></svg></td></tr>
<tr><td><span class="cb"></span></td><td class="s">10</td><td><svg class="lg" width="40" height="40" viewBox="0 0 40 40"><defs><linearGradient id="l10" x1="0" y1="0" x2="0" y2="1"><stop offset="0" stop-color="#ff917f"/><stop offset=".5" stop-color="#ff4a5e"/><stop offset="1" stop-color="#ff003f"/></linearGradient></defs><rect y=".800" width="40" height="39.200" rx="7.500" fill="url(#l10)"/><g fill="none" stroke="#fff" stroke-width="1.150" stroke-linejoin="round" stroke-linecap="round"><path d="M16.600 14.800 Q11.600 9 15 8.200 Q17.600 8 20 10 Q23 8 25.600 8.200 Q28.600 9 23.600 14.800z"/><path d="M15.600 15.400 Q9.600 20 8.200 29.600 Q8 33.400 11.500 33.400 H29 Q32.500 33.400 32.600 29.600 Q31 20 24.800 15.400z"/><path d="M16.400 18.800 L20.400 24 L24.400 18.800 M16.200 24.200h8.400 M16.200 28h8.400 M20.400 23.500v7.600" stroke-width="1.300"/></g></svg></td><td>多点管家</td><td>推广链接</td><td>78%</td><td>身份证</td><td class="dt">2019-02-19 10:38:43</td><td class="dt">2019-02-23 12:13:28</td><td>0</td><td><span class="lb g">信花花系列</span></td><td><span class="lb d">已禁用</span></td><td><svg class="ops" width="52" height="13" viewBox="0 0 52 13"><circle cx="5.500" cy="6.800" r="4.900" fill="none" stroke="#333" stroke-width="1.100"/><path d="M3.200 6.900 L5 8.600 L8 5.100" fill="none" stroke="#333" stroke-width="1.100"/><path d="M29.400 0.600 L31.800 3 L30.800 4 L28.400 1.600z M27.800 2.200 L30.200 4.600 L24.200 10.600 L21.800 8.200z M21.300 8.900 L23.500 11.100 L20.400 12z" fill="#222"/><path d="M45.200 1h2.600v1H50.600v1.200h-8.200V2h2.800z M43 4h7l-.5 7.600h-6z M44.800 5.200v5.200h.8V5.200z M47.400 5.200v5.200h.8V5.200z" fill="#666" fill-rule="evenodd"/></svg></td></tr>
</tbody></table>
<div id="sb"><svg class="abs" style="left:4.500px;top:7px" width="8" height="4.500" viewBox="0 0 8 4.500"><path d="M0 4.500 L4 0 L8 4.500z" fill="#a3a3a3"/></svg><i></i><svg class="abs" style="left:4.500px;top:842px" width="8" height="4.500" viewBox="0 0 8 4.500"><path d="M0 0 H8 L4 4.500z" fill="#505050"/></svg></div>
</div>
<svg class="abs" style="z-index:5;left:200px;top:436px" width="17" height="61" viewBox="0 0 17 61"><path d="M0 0 L17 9 V52 L0 61z" fill="#eaeaea"/><path d="M12.200 24 V37.400 L5 30.700z" fill="#bdbdbd"/></svg>
</body>
</html>
